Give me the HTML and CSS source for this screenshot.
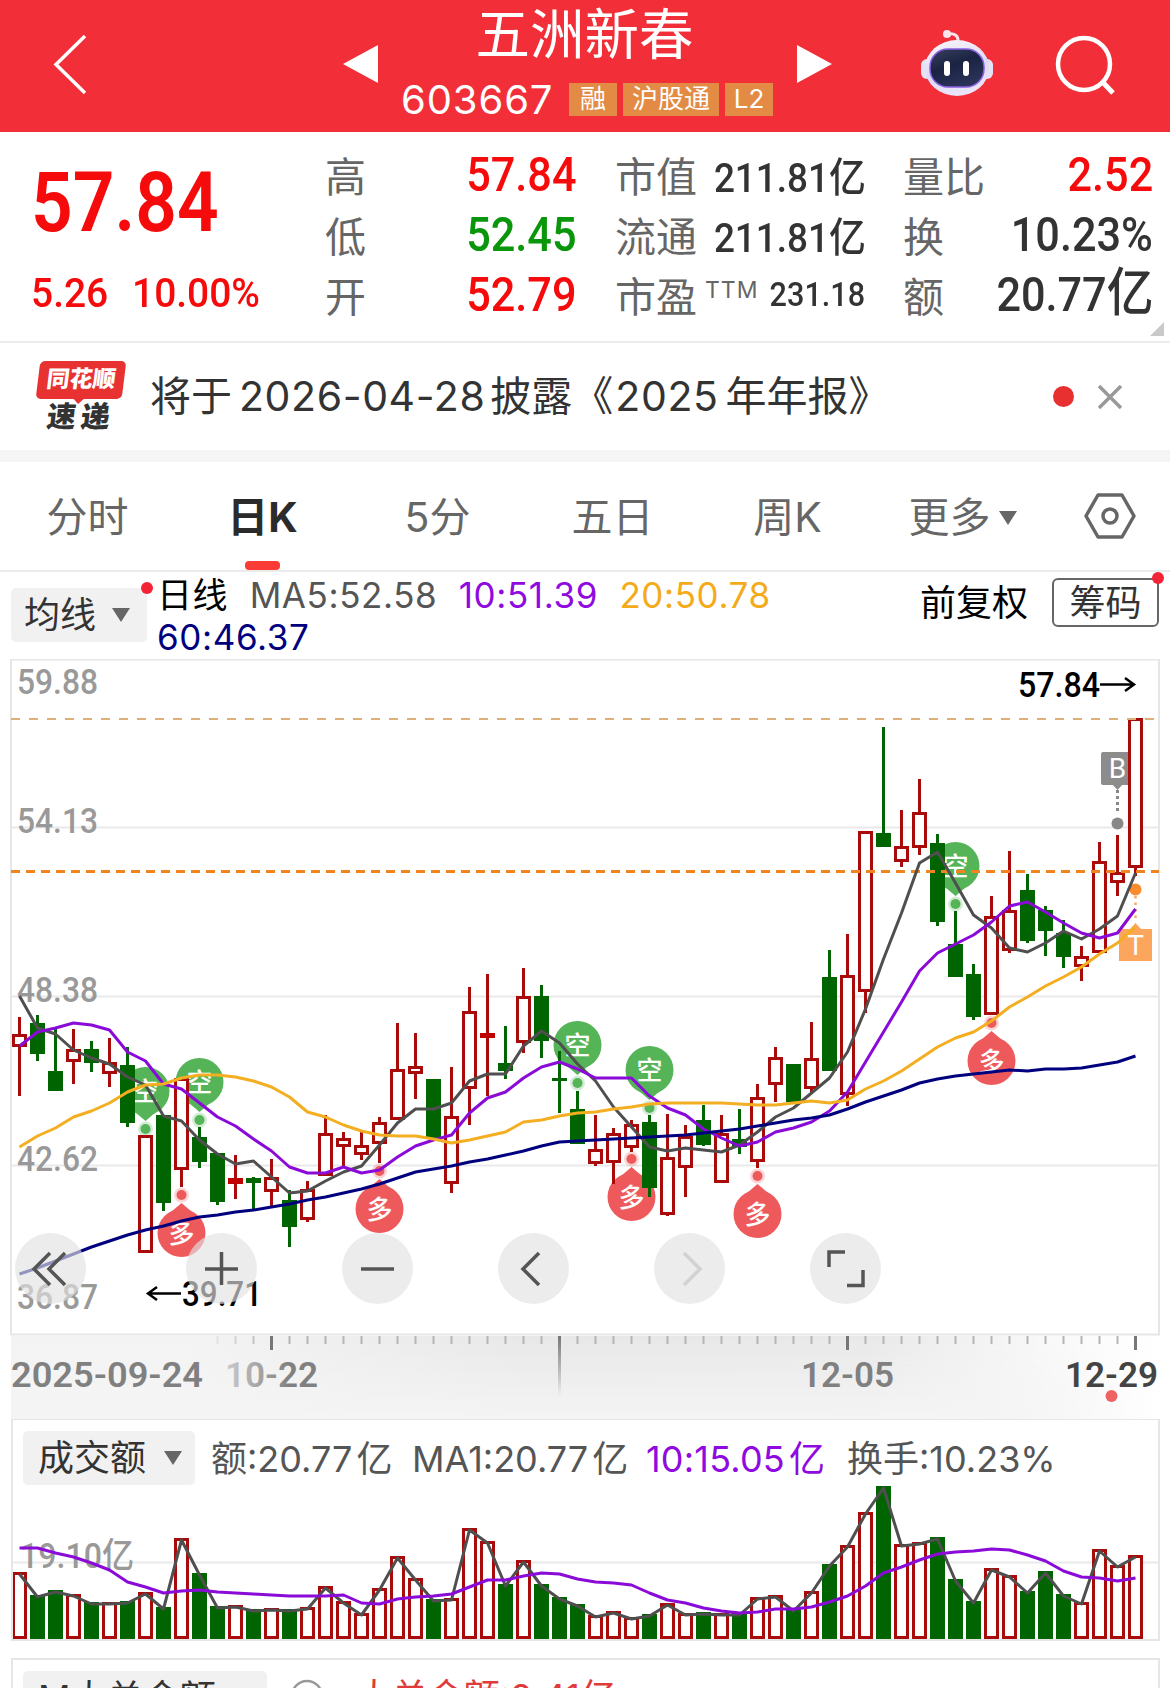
FILE: index.html
```html
<!DOCTYPE html>
<html lang="zh-CN">
<head>
    <meta charset="UTF-8">
    <meta name="viewport" content="width=device-width, initial-scale=1.0">
    <title>五洲新春 603667</title>
    <link rel="stylesheet" href="styles.css">
</head>
<body>
    <header class="header">
        <svg class="back" width="34" height="60" viewBox="0 0 34 60"><path d="M32 1 L3 29.500 L32 58" fill="none" stroke="#fff" stroke-width="3.500"/></svg>
        <svg class="prev" width="35" height="38" viewBox="0 0 35 38"><path d="M35 0 V38 L0 19Z" fill="#fff"/></svg>
        <div class="stock">
            <h1>五洲新春</h1>
            <div class="code-row">
                <span class="code">603667</span>
                <span class="tag">融</span>
                <span class="tag tag-wide">沪股通</span>
                <span class="tag">L2</span>
            </div>
        </div>
        <svg class="next" width="35" height="38" viewBox="0 0 35 38"><path d="M0 0 V38 L35 19Z" fill="#fff"/></svg>
        <svg class="robot" width="74" height="68" viewBox="0 0 74 68">
            <defs>
                <linearGradient id="shell" x1="0" y1="0" x2="0.3" y2="1">
                    <stop offset="0" stop-color="#fdf5fa"/>
                    <stop offset="0.6" stop-color="#dcdcf5"/>
                    <stop offset="1" stop-color="#e9e4f8"/>
                </linearGradient>
                <linearGradient id="visor" x1="0" y1="0" x2="0.5" y2="1">
                    <stop offset="0" stop-color="#39415f"/>
                    <stop offset="0.5" stop-color="#1b2343"/>
                    <stop offset="1" stop-color="#2a3358"/>
                </linearGradient>
            </defs>
            <path d="M27 5 Q39 3 38 14" fill="none" stroke="#fbe3ea" stroke-width="3"/>
            <circle cx="27" cy="5" r="4" fill="#fbe6ee"/>
            <rect x="1" y="30" width="12" height="20" rx="6" fill="#e6e2f5"/>
            <rect x="61" y="30" width="12" height="20" rx="6" fill="#e6e2f5"/>
            <ellipse cx="37" cy="39" rx="32" ry="28" fill="url(#shell)"/>
            <rect x="10" y="20" width="54" height="38" rx="18" fill="url(#visor)" stroke="#8a5fe0" stroke-width="1.500"/>
            <rect x="24" y="32" width="6" height="15" rx="3" fill="#fff"/>
            <rect x="43" y="32" width="6" height="15" rx="3" fill="#fff"/>
        </svg>
        <svg class="search" width="62" height="62" viewBox="0 0 62 62"><g fill="none" stroke="#fff" stroke-width="4.500"><circle cx="29" cy="29" r="26"/><path d="M48 47.500 L58 58" stroke-width="5"/></g></svg>
    </header>

    <section class="quote">
        <div class="quote-main">
            <div class="price num">57.84</div>
            <div class="change"><span class="num">5.26</span><span class="num">10.00%</span></div>
        </div>
        <dl class="col col-a">
            <div><dt>高</dt><dd class="num up">57.84</dd></div>
            <div><dt>低</dt><dd class="num down">52.45</dd></div>
            <div><dt>开</dt><dd class="num up">52.79</dd></div>
        </dl>
        <dl class="col col-b">
            <div><dt>市值</dt><dd class="num">211.81<i>亿</i></dd></div>
            <div><dt>流通</dt><dd class="num">211.81<i>亿</i></dd></div>
            <div><dt>市盈<sup>TTM</sup></dt><dd class="num small">231.18</dd></div>
        </dl>
        <dl class="col col-c">
            <div><dt>量比</dt><dd class="num up">2.52</dd></div>
            <div><dt>换</dt><dd class="num">10.23%</dd></div>
            <div><dt>额</dt><dd class="num">20.77<i>亿</i></dd></div>
        </dl>
        <span class="corner"></span>
    </section>

    <section class="notice">
        <div class="notice-logo">
            <span class="logo-top">同花顺</span>
            <span class="logo-bottom">速递</span>
        </div>
        <p>将于<span>2026-04-28</span>披露《<span class="year">2025</span>年年报》</p>
        <i class="dot"></i>
        <svg class="close" width="24" height="24" viewBox="0 0 24 24"><path d="M1 1 L23 23 M23 1 L1 23" stroke="#999" stroke-width="3.500"/></svg>
    </section>

    <nav class="tabs">
        <a>分时</a>
        <a class="active">日K</a>
        <a>5分</a>
        <a>五日</a>
        <a>周K</a>
        <a>更多<i class="caret"></i></a>
        <svg class="settings" width="52" height="46" viewBox="0 0 52 46"><g fill="none" stroke="#666" stroke-width="3.500"><path d="M14 2 H38 L50 23 L38 44 H14 L2 23Z" stroke-linejoin="round"/><circle cx="26" cy="23" r="7"/></g></svg>
    </nav>

    <section class="ma-bar">
        <button class="select select-ma">均线<i class="caret"></i><i class="badge"></i></button>
        <div class="legend">
            <span class="c-black">日线</span>
            <span class="c-ma5">MA5:52.58</span>
            <span class="c-ma10">10:51.39</span>
            <span class="c-ma20">20:50.78</span>
            <span class="c-ma60">60:46.37</span>
        </div>
        <span class="adjust">前复权</span>
        <button class="chips">筹码<i class="badge"></i></button>
    </section>

    <section class="pane">
        <svg id="kline" width="1170" height="677" viewBox="0 659 1170 677"></svg>
        <div class="controls">
            <button><svg viewBox="0 0 71 71"><path d="M35 20 L19 36 L35 52 M50 20 L34 36 L50 52"/></svg></button>
            <button><svg viewBox="0 0 71 71"><path d="M19 36 H52 M35.500 19 V52"/></svg></button>
            <button><svg viewBox="0 0 71 71"><path d="M19 36 H52"/></svg></button>
            <button><svg viewBox="0 0 71 71"><path d="M41 20 L25 36 L41 52"/></svg></button>
            <button class="disabled"><svg viewBox="0 0 71 71"><path d="M30 20 L46 36 L30 52"/></svg></button>
            <button><svg viewBox="0 0 71 71"><path d="M19 34 V19 H35 M37 52.500 H53 V37"/></svg></button>
        </div>
    </section>

    <section class="axis">
        <svg id="axis" width="1148" height="83" viewBox="11 1336 1148 83"></svg>
    </section>

    <section class="volume">
        <div class="volume-head">
            <button class="select">成交额<i class="caret"></i></button>
            <span class="v1">额:20.77<b>亿</b></span>
            <span class="v2">MA1:20.77<b>亿</b></span>
            <span class="v3 c-ma10">10:15.05<b>亿</b></span>
            <span class="v4">换手:10.23%</span>
        </div>
        <svg id="volume" width="1148" height="156" viewBox="11 1485 1148 156"></svg>
    </section>

    <section class="orders">
        <button class="select select-wide">M大单金额<i class="caret"></i></button>
        <svg width="34" height="34" viewBox="0 0 34 34"><circle cx="17" cy="17" r="15" fill="none" stroke="#999" stroke-width="2.500"/><text x="17" y="26" text-anchor="middle" font-size="24" fill="#999">?</text></svg>
        <span class="order-value">大单金额:2.41亿</span>
    </section>

    <script src="chart.js"></script>
</body>
</html>
```
FILE: styles.css
```css
* {
    box-sizing: border-box;
}

body {
    margin: 0;
    width: 1170px;
    height: 1688px;
    overflow: hidden;
    background: #fff;
    color: #333;
    font-family: Inter, "Noto Sans CJK SC", sans-serif;
}

h1, p, dl, dd {
    margin: 0;
    font-weight: 400;
}

i, b {
    font-style: normal;
    font-weight: inherit;
}

button {
    border: none;
    padding: 0;
    font: inherit;
    color: inherit;
}

svg {
    display: block;
    flex: none;
}

/* header */
.header {
    display: flex;
    height: 132px;
    padding-left: 53px;
    background: #f22f38;
    color: #fff;
}

.back { margin-top: 35px; }
.prev { margin: 45px 0 0 256px; }
.next { margin: 45px 0 0 23px; }
.robot { margin: 29px 0 0 88px; }
.search { margin: 35px 0 0 61px; }

.stock {
    width: 373px;
    margin-left: 23px;
    flex: none;
}

.stock h1 {
    height: 78px;
    line-height: 69px;
    text-align: center;
    font-size: 54.5px;
    padding-right: 6px;
}

.code-row {
    display: flex;
    align-items: center;
    height: 42px;
}

.code {
    width: 168px;
    flex: none;
    font-size: 40px;
    letter-spacing: 0.9px;
}

.tag {
    width: 48px;
    height: 33px;
    margin-right: 6px;
    flex: none;
    background: #e38b45;
    font-size: 26px;
    line-height: 32px;
    text-align: center;
}

.tag-wide {
    width: 96px;
}

/* quote */
.quote {
    position: relative;
    display: flex;
    height: 211px;
    border-bottom: 2px solid #ececec;
}

.num {
    font-family: Roboto, "Noto Sans CJK SC", sans-serif;
    font-weight: 500;
    transform: scaleX(0.9);
    transform-origin: right;
}

.up { color: #f50b0b; }
.down { color: #0a960a; }

.quote-main {
    width: 325px;
    padding: 23px 0 0 31px;
    color: #f50b0b;
}

.quote-main .num {
    transform-origin: left;
}

.price {
    font-size: 83px;
    line-height: 96px;
    font-weight: 600;
    transform: scaleX(0.88);
}

.change {
    display: flex;
    margin-top: 18px;
    font-size: 41px;
    line-height: 48px;
}

.change .num {
    width: 101px;
    transform: scaleX(0.95);
}

.col {
    padding-top: 12px;
}

.col > div {
    display: flex;
    align-items: center;
    justify-content: space-between;
    height: 60px;
}

.col-a { width: 251px; }
.col-b { width: 250px; margin-left: 39px; }
.col-c { width: 250px; margin-left: 38px; }

dt {
    font-size: 41px;
    color: #666;
    white-space: nowrap;
}

dt sup {
    font-size: 23px;
    margin-left: 8px;
    vertical-align: 14px;
    line-height: 0;
    letter-spacing: 1px;
}

dd {
    font-size: 48px;
    white-space: nowrap;
}

.col-b dd { font-size: 41px; }
.col-b dd.small { font-size: 34px; }
.col-c dd i { font-size: 52px; line-height: 48px; }

.corner {
    position: absolute;
    right: 6px;
    bottom: 5px;
    border-left: 14px solid transparent;
    border-bottom: 14px solid #c9c9c9;
}

/* notice */
.notice {
    display: flex;
    align-items: center;
    height: 107px;
    padding-left: 38px;
}

.notice-logo {
    width: 86px;
    height: 72px;
    font-weight: 900;
}

.logo-top, .logo-bottom {
    display: block;
    transform: skewX(-7deg);
    text-align: center;
}

.logo-top {
    position: relative;
    height: 38px;
    border-radius: 5px;
    background: #e83232;
    color: #fff;
    font-size: 23px;
    line-height: 37px;
}

.logo-top::after {
    content: "";
    position: absolute;
    left: 37px;
    top: 37px;
    border: 6px solid transparent;
    border-top-color: #e83232;
}

.logo-bottom {
    font-size: 29px;
    line-height: 36px;
    letter-spacing: 5px;
}

.notice p {
    width: 903px;
    margin-bottom: 7px;
    padding-left: 26px;
    font-size: 41px;
    white-space: nowrap;
}

.notice p span {
    letter-spacing: 0.6px;
    margin: 0 5px 0 7px;
}

.notice p .year {
    margin: 0 7px 0 2px;
}

.dot {
    width: 21px;
    height: 21px;
    margin-left: 26px;
    border-radius: 50%;
    background: #e93030;
}

.close {
    margin-left: 24px;
}

/* period tabs */
.tabs {
    display: flex;
    align-items: center;
    height: 122px;
    border-top: 12px solid #f5f5f5;
    border-bottom: 2px solid #ebebeb;
    color: #666;
    font-size: 41px;
}

.tabs a {
    position: relative;
    width: 175px;
    margin-bottom: 4px;
    text-align: center;
}

.tabs .active {
    color: #2b2b2b;
    font-weight: 700;
}

.tabs .active::after {
    content: "";
    position: absolute;
    left: 70px;
    bottom: -26px;
    width: 35px;
    height: 9px;
    border-radius: 4px;
    background: #fb3b35;
}

.settings {
    margin-left: 34px;
}

.caret {
    display: inline-block;
    border: 9px solid transparent;
    border-top: 14px solid #666;
    border-bottom: 0;
    margin-left: 8px;
    vertical-align: 7px;
}

/* moving average bar */
.ma-bar {
    display: flex;
    height: 87px;
    padding: 6px 11px 0;
}

.select {
    position: relative;
    height: 54px;
    padding-left: 15px;
    border-radius: 5px;
    background: #f1f1f1;
    color: #333;
    font-size: 36px;
    line-height: 51px;
    text-align: left;
    flex: none;
}

.select .caret {
    margin-left: 18px;
    vertical-align: 6px;
}

.select-ma {
    width: 136px;
    margin-top: 10px;
    padding-left: 13px;
}

.select-ma .caret {
    margin-left: 16px;
}

.badge {
    position: absolute;
    top: -6px;
    right: -6px;
    width: 12px;
    height: 12px;
    border-radius: 50%;
    background: #f22436;
}

.legend {
    width: 760px;
    margin-top: -4px;
    padding-left: 10px;
    font-size: 35px;
    line-height: 42px;
    letter-spacing: 0.6px;
    flex: none;
}

.legend span {
    margin-right: 11px;
}

.c-black { color: #000; }
.c-ma5 { color: #555; }
.c-ma10 { color: #8f0ae0; }
.c-ma20 { color: #f3ab1b; }
.c-ma60 { color: #00007f; }

.adjust {
    width: 132px;
    margin-left: 13px;
    color: #000;
    font-size: 36px;
    line-height: 50px;
    flex: none;
}

.chips {
    position: relative;
    width: 107px;
    height: 49px;
    border: 2px solid #666;
    border-radius: 6px;
    background: #fff;
    font-size: 36px;
    line-height: 42px;
    flex: none;
}

.chips .badge {
    top: -8px;
    right: -7px;
}

/* candles */
.pane {
    position: relative;
    height: 677px;
}

.controls {
    position: absolute;
    left: 15px;
    top: 574px;
    display: flex;
    gap: 85px;
}

.controls button {
    width: 71px;
    height: 71px;
    border-radius: 50%;
    background: rgba(226, 226, 226, 0.65);
}

.controls button:first-child {
    margin-right: 15px;
}

.controls svg {
    fill: none;
    stroke: #555;
    stroke-width: 3.5;
}

.controls .disabled svg {
    stroke: #d2d2d2;
}

svg text {
    font-family: Roboto, "Noto Sans CJK SC", sans-serif;
}

.axis {
    height: 83px;
    margin-left: 11px;
    width: 1148px;
    background: linear-gradient(to right, #f4f4f4 80%, #fff);
}

/* volume */
.volume {
    width: 1149px;
    height: 222px;
    margin-left: 11px;
    border: 2px solid #e6e6e6;
    border-top-width: 1px;
    overflow: hidden;
}

.volume-head {
    display: flex;
    height: 65px;
    padding: 11px 0 0 10px;
    font-size: 36px;
    line-height: 56px;
    white-space: nowrap;
    color: #555;
}

.volume-head .select {
    width: 172px;
}

.volume-head .c-ma10 { color: #8f0ae0; }
.volume-head b { margin-left: 4px; }
.v1 { margin-left: 16px; width: 201px; }
.v2 { width: 234px; }
.v3 { width: 201px; letter-spacing: 0.2px; }

#volume {
    margin-left: -2px;
}

/* big orders */
.orders {
    display: flex;
    width: 1149px;
    height: 60px;
    margin: 17px 0 0 11px;
    padding: 11px 0 0 10px;
    border: 2px solid #e6e6e6;
    font-size: 36px;
    line-height: 52px;
    color: #e03a3a;
}

.select-wide {
    width: 244px;
    letter-spacing: 0.4px;
}

.orders svg {
    margin: 8px 0 0 23px;
}

.order-value {
    margin-left: 32px;
}
```
FILE: chart.js
```javascript
const X0 = 19.5;
const STEP = 18;
const RED = '#a90b0b';
const GREEN = '#006400';

// kind, high, body top, body bottom, low, turnover bar top
const days = [
    ['r', 1017, 1034, 1047, 1096, 1572], ['g', 1015, 1023, 1054, 1061, 1595],
    ['g', 1027, 1071, 1091, 1091, 1590], ['r', 1029, 1049, 1062, 1084, 1594],
    ['g', 1041, 1049, 1063, 1072, 1602], ['r', 1038, 1062, 1074, 1087, 1602],
    ['g', 1047, 1065, 1123, 1127, 1601], ['r', 1135, 1135, 1253, 1253, 1592],
    ['g', 1115, 1115, 1203, 1211, 1607], ['r', 1078, 1078, 1170, 1187, 1538],
    ['g', 1127, 1137, 1162, 1168, 1573], ['g', 1153, 1153, 1202, 1205, 1606],
    ['r', 1155, 1178, 1184, 1199, 1605], ['g', 1177, 1178, 1183, 1209, 1609],
    ['r', 1159, 1177, 1192, 1206, 1608], ['g', 1190, 1200, 1227, 1247, 1609],
    ['r', 1181, 1189, 1220, 1222, 1607], ['r', 1115, 1133, 1176, 1176, 1586],
    ['r', 1132, 1138, 1147, 1166, 1601], ['r', 1130, 1145, 1155, 1160, 1613],
    ['r', 1117, 1122, 1144, 1163, 1588], ['r', 1023, 1069, 1120, 1120, 1556],
    ['r', 1033, 1066, 1074, 1099, 1578], ['g', 1079, 1079, 1139, 1139, 1599],
    ['r', 1067, 1116, 1184, 1193, 1598], ['r', 987, 1011, 1089, 1125, 1528],
    ['r', 974, 1033, 1038, 1096, 1541], ['g', 1026, 1063, 1071, 1079, 1584],
    ['r', 968, 996, 1043, 1053, 1560], ['g', 985, 996, 1041, 1058, 1584],
    ['g', 1051, 1078, 1081, 1113, 1597], ['g', 1091, 1109, 1144, 1144, 1604],
    ['r', 1115, 1149, 1164, 1166, 1615], ['r', 1128, 1133, 1163, 1184, 1611],
    ['r', 1120, 1124, 1148, 1152, 1617], ['g', 1115, 1122, 1188, 1197, 1614],
    ['r', 1114, 1157, 1215, 1216, 1603], ['r', 1125, 1136, 1168, 1197, 1613],
    ['g', 1105, 1120, 1145, 1146, 1612], ['r', 1115, 1133, 1183, 1183, 1613],
    ['g', 1109, 1139, 1147, 1154, 1613], ['r', 1084, 1097, 1162, 1168, 1597],
    ['r', 1047, 1057, 1085, 1102, 1595], ['g', 1064, 1064, 1102, 1102, 1609],
    ['r', 1022, 1058, 1089, 1093, 1591], ['g', 950, 977, 1071, 1071, 1564],
    ['r', 934, 975, 1095, 1106, 1545], ['r', 831, 831, 992, 1013, 1512],
    ['g', 727, 833, 847, 847, 1486], ['r', 810, 846, 862, 867, 1544],
    ['r', 779, 812, 848, 855, 1542], ['g', 834, 843, 922, 926, 1537],
    ['g', 911, 944, 977, 977, 1579], ['g', 964, 974, 1017, 1020, 1601],
    ['r', 896, 916, 1015, 1015, 1568], ['r', 851, 910, 951, 953, 1575],
    ['g', 874, 890, 941, 943, 1591], ['g', 906, 910, 931, 956, 1571],
    ['g', 920, 933, 957, 968, 1594], ['r', 946, 956, 967, 981, 1602],
    ['r', 842, 861, 953, 953, 1549], ['r', 835, 872, 883, 896, 1565],
    ['r', 718, 718, 868, 876, 1555]
];

const ma5 = [996, 1028, 1034, 1050, 1058, 1064, 1077, 1085, 1116, 1121, 1140, 1154, 1164, 1161, 1177, 1193, 1191, 1181, 1172, 1166, 1145, 1123, 1109, 1109, 1103, 1081, 1074, 1074, 1046, 1031, 1043, 1064, 1081, 1107, 1127, 1147, 1151, 1148, 1150, 1152, 1145, 1132, 1117, 1108, 1093, 1078, 1052, 1009, 959, 913, 863, 852, 883, 915, 928, 948, 952, 943, 931, 939, 929, 916, 873];
const ma10 = [1046, 1032, 1028, 1023, 1025, 1030, 1052, 1061, 1084, 1089, 1103, 1117, 1126, 1139, 1151, 1167, 1173, 1173, 1167, 1173, 1170, 1157, 1146, 1140, 1135, 1113, 1098, 1092, 1078, 1067, 1062, 1069, 1078, 1078, 1078, 1096, 1108, 1115, 1129, 1138, 1146, 1142, 1132, 1128, 1122, 1111, 1092, 1062, 1032, 1002, 971, 953, 944, 935, 922, 906, 902, 912, 923, 933, 938, 933, 909];
const ma20 = [1147, 1136, 1128, 1117, 1111, 1103, 1092, 1085, 1084, 1078, 1075, 1075, 1077, 1081, 1087, 1097, 1112, 1117, 1125, 1131, 1135, 1136, 1136, 1139, 1143, 1140, 1136, 1132, 1122, 1120, 1116, 1113, 1112, 1109, 1107, 1104, 1103, 1103, 1103, 1103, 1104, 1105, 1105, 1103, 1101, 1103, 1100, 1089, 1081, 1071, 1059, 1047, 1038, 1032, 1021, 1007, 997, 986, 977, 967, 954, 943, 927];
const ma60 = [1274, 1268, 1261, 1254, 1247, 1241, 1235, 1230, 1226, 1221, 1217, 1215, 1212, 1210, 1207, 1204, 1200, 1197, 1193, 1189, 1184, 1178, 1172, 1169, 1166, 1162, 1159, 1155, 1151, 1146, 1142, 1141, 1140, 1139, 1138, 1137, 1136, 1135, 1133, 1131, 1129, 1126, 1123, 1120, 1118, 1115, 1109, 1102, 1096, 1090, 1083, 1079, 1076, 1074, 1072, 1070, 1071, 1069, 1069, 1068, 1065, 1062, 1056];
const vol10 = [1548, 1548, 1553, 1557, 1563, 1570, 1582, 1587, 1593, 1591, 1590, 1592, 1593, 1594, 1595, 1596, 1596, 1596, 1595, 1603, 1604, 1599, 1597, 1596, 1594, 1587, 1580, 1580, 1576, 1573, 1574, 1579, 1582, 1583, 1585, 1593, 1600, 1603, 1608, 1611, 1613, 1612, 1609, 1609, 1607, 1602, 1596, 1586, 1573, 1567, 1560, 1554, 1552, 1551, 1549, 1550, 1555, 1561, 1571, 1577, 1578, 1581, 1578];

const x = i => X0 + i * STEP;
const rect = (l, t, w, h, fill) => `<rect x="${l}" y="${t}" width="${w}" height="${h}" fill="${fill}"/>`;
const line = (x1, y1, x2, y2, stroke, w, extra = '') => `<line x1="${x1}" y1="${y1}" x2="${x2}" y2="${y2}" stroke="${stroke}" stroke-width="${w}" ${extra}/>`;
const curve = (ys, color) => `<polyline fill="none" stroke="${color}" stroke-width="3" stroke-linejoin="round" points="${ys.map((y, i) => `${x(i)},${y}`).join(' ')}"/>`;
const label = (l, y, w, text, fill, weight = 500) => `<text x="${l}" y="${y}" font-size="35" font-weight="${weight}" fill="${fill}" textLength="${w}" lengthAdjust="spacingAndGlyphs">${text}</text>`;

function hollow(cx, top, bottom) {
    return `<rect x="${cx - 6}" y="${top + 1.5}" width="12" height="${Math.max(bottom - top - 3, 1)}" fill="#fff" stroke="${RED}" stroke-width="3"/>`;
}

function candle([kind, high, top, bottom, low], i) {
    const color = kind === 'r' ? RED : GREEN;
    const wick = line(x(i), high, x(i), low, color, 3);
    if (kind === 'g') return wick + rect(x(i) - 7.5, top, 15, bottom - top, color);
    if (bottom - top < 7) return wick + rect(x(i) - 7.5, top, 15, bottom - top, '#c00000');
    return wick + hollow(x(i), top, bottom);
}

// y is the centre of the small dot that the pin points at
function pin(i, y, kind) {
    const short = kind === '空';
    const color = short ? '#55b458' : '#ee5a5c';
    const cx = x(i);
    const cy = short ? y - 38 : y + 38;
    const d = short ? 1 : -1;
    return `<circle cx="${cx}" cy="${y}" r="7.500" fill="${color}" opacity="0.25"/>
        <circle cx="${cx}" cy="${y}" r="5" fill="${color}"/>
        <circle cx="${cx}" cy="${cy}" r="24" fill="${color}"/>
        <path d="M${cx - 14} ${cy + 18 * d} L${cx} ${cy + 30 * d} L${cx + 14} ${cy + 18 * d}Z" fill="${color}"/>
        <text x="${cx}" y="${cy + 9.5}" font-size="26" font-weight="500" fill="#fff" text-anchor="middle">${kind}</text>`;
}

function drawKline() {
    let s = '';
    [827.5, 996.5, 1165.5].forEach(y => { s += line(11, y, 1159, y, '#e9e9e9', 2); });
    s += `<rect x="11" y="659.500" width="1148" height="675" fill="none" stroke="#e6e6e6" stroke-width="2"/>`;
    s += [[7, 1129], [10, 1120], [31, 1083], [35, 1108], [52, 904]].map(p => pin(...p, '空')).join('');
    s += [[9, 1195], [20, 1171], [34, 1159], [41, 1176], [54, 1023]].map(p => pin(...p, '多')).join('');
    s += `<rect x="1101" y="752" width="33" height="33" rx="2" fill="#8c8c8c"/><path d="M1112 784 h11 l-5.500 6Z" fill="#8c8c8c"/>
        <text x="1117.500" y="778" font-size="28" fill="#fff" text-anchor="middle">B</text>`;
    s += line(1117.5, 790, 1117.5, 813, '#888', 3, 'stroke-dasharray="3 3"') + '<circle cx="1117.500" cy="823.500" r="6" fill="#888"/>';
    s += days.map(candle).join('');
    s += label(17, 694, 81, '59.88', '#999') + label(17, 833, 81, '54.13', '#999') + label(17, 1002, 81, '48.38', '#999');
    s += label(17, 1171, 81, '42.62', '#999') + label(17, 1309, 81, '36.87', '#999');
    s += line(11, 719, 1155, 719, '#dcb078', 1.8, 'stroke-dasharray="9 9"');
    s += line(11, 871.5, 1159, 871.5, '#f08421', 3, 'stroke-dasharray="9 6"');
    s += '<circle cx="1135.500" cy="889.500" r="6" fill="#fb8c2e"/>' + line(1135.5, 896, 1135.5, 918, '#f9a665', 2.5, 'stroke-dasharray="2.500 4"');
    s += '<path d="M1130 929 h11 l-5.500 -6Z" fill="#fca55c"/>' + rect(1119, 929, 33, 32, '#fca55c');
    s += curve(ma5, '#4f4f4f') + curve(ma10, '#8a0ad8') + curve(ma20, '#f4ae21') + curve(ma60, '#00007f');
    s += '<text x="1135.500" y="955" font-size="28" fill="#fff" text-anchor="middle">T</text>';
    s += label(1018, 697, 82, '57.84', '#000');
    s += '<path d="M1100 684.500 H1134 M1125 678 L1134 684.500 L1125 691" fill="none" stroke="#000" stroke-width="2.500"/>';
    s += label(182, 1306, 80, '39.71', '#000');
    s += '<path d="M181 1293.500 H148 M157 1287 L148 1293.500 L157 1300" fill="none" stroke="#000" stroke-width="2.500"/>';
    document.getElementById('kline').innerHTML = s;
}

function drawAxis() {
    let s = `<defs>
        <linearGradient id="band"><stop offset="0.15" stop-color="#e9e9e9" stop-opacity="0"/><stop offset="0.45" stop-color="#e8e8e8"/><stop offset="0.75" stop-color="#e9e9e9"/><stop offset="1" stop-color="#fff" stop-opacity="0"/></linearGradient>
        <linearGradient id="veil" x2="0" y2="1"><stop offset="0" stop-color="#f4f4f4" stop-opacity="0"/><stop offset="1" stop-color="#f4f4f4"/></linearGradient>
        <linearGradient id="veilFade"><stop offset="0.8" stop-color="#fff"/><stop offset="1" stop-color="#000"/></linearGradient>
        <mask id="veilMask"><rect x="11" y="1336" width="1148" height="83" fill="url(#veilFade)"/></mask>
        <linearGradient id="stem" x2="0" y2="1"><stop offset="0" stop-color="#777"/><stop offset="1" stop-color="#777" stop-opacity="0"/></linearGradient>
        <linearGradient id="dim"><stop offset="0" stop-color="#ccc"/><stop offset="0.7" stop-color="#808080"/></linearGradient>
    </defs>`;
    s += rect(11, 1336, 1148, 83, 'url(#band)') + '<g mask="url(#veilMask)">' + rect(11, 1336, 1148, 83, 'url(#veil)') + '</g>';
    for (let i = 11; i < 63; i++) {
        const major = i === 14 || i === 46 || i === 62;
        if (i === 30) s += rect(x(i) - 1.5, 1336, 3, 60, 'url(#stem)');
        else s += line(x(i), 1336, x(i), major ? 1350 : 1344, major ? '#777' : '#b5b5b5', major ? 3 : 2, `opacity="${Math.min(1, (i - 10) / 4)}"`);
    }
    s += label(11, 1387, 192, '2025-09-24', '#808080', 600) + label(225, 1387, 93, '10-22', 'url(#dim)', 600);
    s += label(801, 1387, 93, '12-05', '#808080', 600) + label(1065, 1387, 93, '12-29', '#444', 600);
    s += '<circle cx="1111.500" cy="1396" r="6" fill="#ef6264"/>';
    document.getElementById('axis').innerHTML = s;
}

function drawVolume() {
    let s = line(11, 1562.5, 1159, 1562.5, '#e9e9e9', 2);
    days.forEach((d, i) => {
        s += d[0] === 'g' ? rect(x(i) - 7.5, d[5], 15, 1639 - d[5], GREEN) : hollow(x(i), d[5], 1639);
    });
    s += label(20, 1568, 114, '19.10亿', '#999');
    s += curve(days.map(d => d[5] + 2), '#4f4f4f') + curve(vol10, '#8a0ad8');
    document.getElementById('volume').innerHTML = s;
}

drawKline();
drawAxis();
drawVolume();
```
